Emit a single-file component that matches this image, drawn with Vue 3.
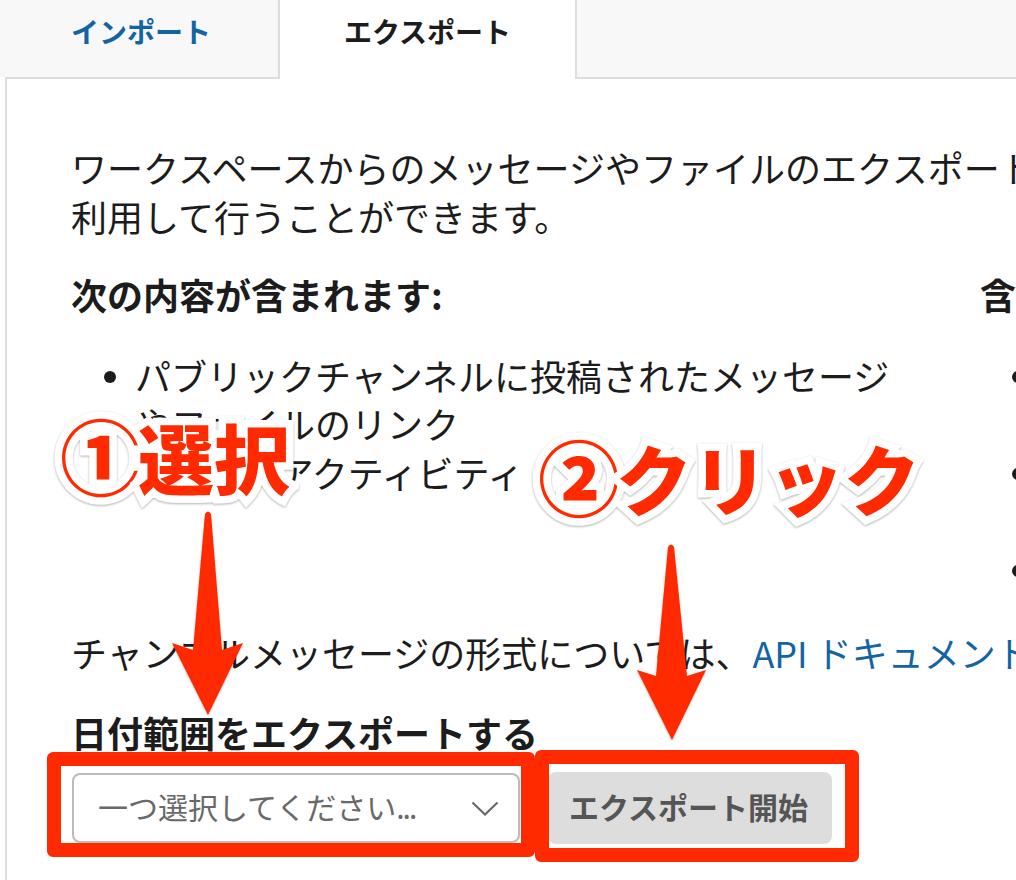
<script setup>
</script>

<template>
  <div class="page">
    <nav class="tabs">
      <a class="tab tab-import">インポート</a>
      <a class="tab tab-export">エクスポート</a>
      <div class="tab-rest"></div>
    </nav>

    <section class="panel">
      <p class="intro">ワークスペースからのメッセージやファイルのエクスポートは、エクスポートツールを<br>利用して行うことができます。</p>

      <div class="columns">
        <div class="col col-in">
          <h3 class="heading">次の内容が含まれます:</h3>
          <ul class="list">
            <li><i class="dot"></i><span>パブリックチャンネルに投稿されたメッセージ<br>やファイルのリンク</span></li>
            <li><i class="dot"></i><span>メンバーアクティビティ</span></li>
          </ul>
        </div>
        <div class="col col-out">
          <h3 class="heading">含まれない内容:</h3>
          <ul class="list">
            <li><i class="dot"></i><span>プライベートチャンネルのメッセージ<br>やファイル</span></li>
            <li><i class="dot"></i><span>ダイレクトメッセージの履歴<br>と編集ログ</span></li>
            <li><i class="dot"></i><span>削除されたメッセージ</span></li>
          </ul>
        </div>
      </div>

      <p class="format">チャンネルメッセージの形式については、<a class="link">API ドキュメント</a>をご覧ください。</p>

      <div class="range-label">日付範囲をエクスポートする</div>
      <div class="controls">
        <div class="select">
          <span>一つ選択してください<span class="more">...</span></span>
          <svg class="chevron" width="28" height="15" viewBox="0 0 28 15" fill="none">
            <path d="M1.5 1.5 L14 13.5 L26.5 1.5" stroke="#696969" stroke-width="2.2" />
          </svg>
        </div>
        <button class="start">エクスポート開始</button>
      </div>
    </section>

    <div class="frame frame-select"></div>
    <div class="frame frame-button"></div>

    <svg class="arrows" width="1016" height="880" viewBox="0 0 1016 880">
      <path d="M205 514 Q208 509 211 514 L222 650 L243 643 L208 715 L172 643 L193 650 Z" fill="#ff2a00" />
      <path d="M668 547 Q671 542 674 547 L687 676 L706 670 L672 740 L637 670 L656 676 Z" fill="#ff2a00" />
    </svg>

    <div class="callout callout-one"><span class="num">①</span>選択</div>
    <div class="callout callout-two"><span class="num">②</span>クリック</div>
  </div>
</template>

<style>
html, body { margin: 0; background: #fff; }
</style>

<style scoped>
.page {
  position: relative;
  width: 1016px;
  height: 880px;
  overflow: hidden;
  background: #fff;
  color: #1d1c1d;
  font-family: "Noto Sans CJK JP", "Noto Sans", sans-serif;
  font-size: 36px;
  line-height: 48.5px;
}
.tabs {
  display: flex;
  align-items: flex-start;
  height: 77px;
  font-size: 28px;
  font-weight: 700;
  line-height: 62px;
}
.tab { box-sizing: border-box; text-align: center; }
.tab-import {
  width: 278px;
  height: 77px;
  padding-left: 4px;
  background: #f8f8f8;
  color: #1264a3;
}
.tab-export {
  position: relative;
  z-index: 1;
  width: 299px;
  height: 79px;
  background: #fff;
  border-left: 2px solid #ddd;
  border-right: 2px solid #ddd;
  color: #1d1c1d;
}
.tab-rest {
  flex: 1;
  height: 77px;
  background: #f8f8f8;
}
.panel {
  box-sizing: border-box;
  height: 803px;
  margin-left: 5px;
  padding: 64px 0 0 64px;
  border-top: 2px solid #ddd;
  border-left: 2px solid #ddd;
  white-space: nowrap;
}
.intro { margin: 0; }
.columns { display: flex; margin-top: 30px; }
.col-in { width: 909px; flex: none; }
.col-out { flex: none; }
.heading {
  margin: 0;
  font-size: 36px;
  font-weight: 700;
  line-height: 48.5px;
}
.list { margin: 32px 0 0; padding: 0; list-style: none; }
.list li { display: flex; align-items: flex-start; }
.dot {
  flex: none;
  width: 12px;
  height: 12px;
  margin: 20px 19px 0 33px;
  border-radius: 50%;
  background: #1d1c1d;
}
.col-out .dot { margin-left: 32px; }
.format { margin: 35px 0 0; }
.link { margin-left: 1px; color: #1264a3; }
.range-label { margin-top: 31px; font-weight: 700; }
.controls {
  display: flex;
  align-items: center;
  gap: 28px;
  margin-top: 16px;
  margin-left: 1px;
}
.select {
  box-sizing: border-box;
  display: flex;
  align-items: center;
  justify-content: space-between;
  width: 448px;
  height: 70px;
  padding: 0 19px 3px 24px;
  border: 2px solid #bbb;
  border-radius: 8px;
  background: #fff;
  color: #696969;
  font-size: 30px;
}
.more { letter-spacing: -2px; }
.chevron { margin-top: 3px; }
.start {
  width: 284px;
  height: 72px;
  padding: 0 3px 3px 0;
  border: 0;
  border-radius: 8px;
  background: #ddd;
  color: #555;
  font: inherit;
  font-size: 30px;
  font-weight: 700;
}
.frame {
  position: absolute;
  box-sizing: border-box;
  border: 14px solid #ff2a00;
  border-radius: 6px;
}
.frame-select { left: 47px; top: 752px; width: 488px; height: 105px; }
.frame-button { left: 535px; top: 750px; width: 324px; height: 112px; }
.arrows {
  position: absolute;
  left: 0;
  top: 0;
  filter: drop-shadow(0 1px 1px rgba(0, 0, 0, 0.25));
}
.callout {
  position: absolute;
  color: #ff2a00;
  font-size: 76px;
  font-weight: 900;
  line-height: 1;
  white-space: nowrap;
  -webkit-text-stroke: 15px #fff;
  paint-order: stroke fill;
  filter: drop-shadow(0 1px 1px rgba(0, 0, 0, 0.3));
}
.num {
  font-size: 82px;
  letter-spacing: -4px;
}
.callout-one { left: 60px; top: 413px; }
.callout-two { left: 538px; top: 434px; }
</style>
